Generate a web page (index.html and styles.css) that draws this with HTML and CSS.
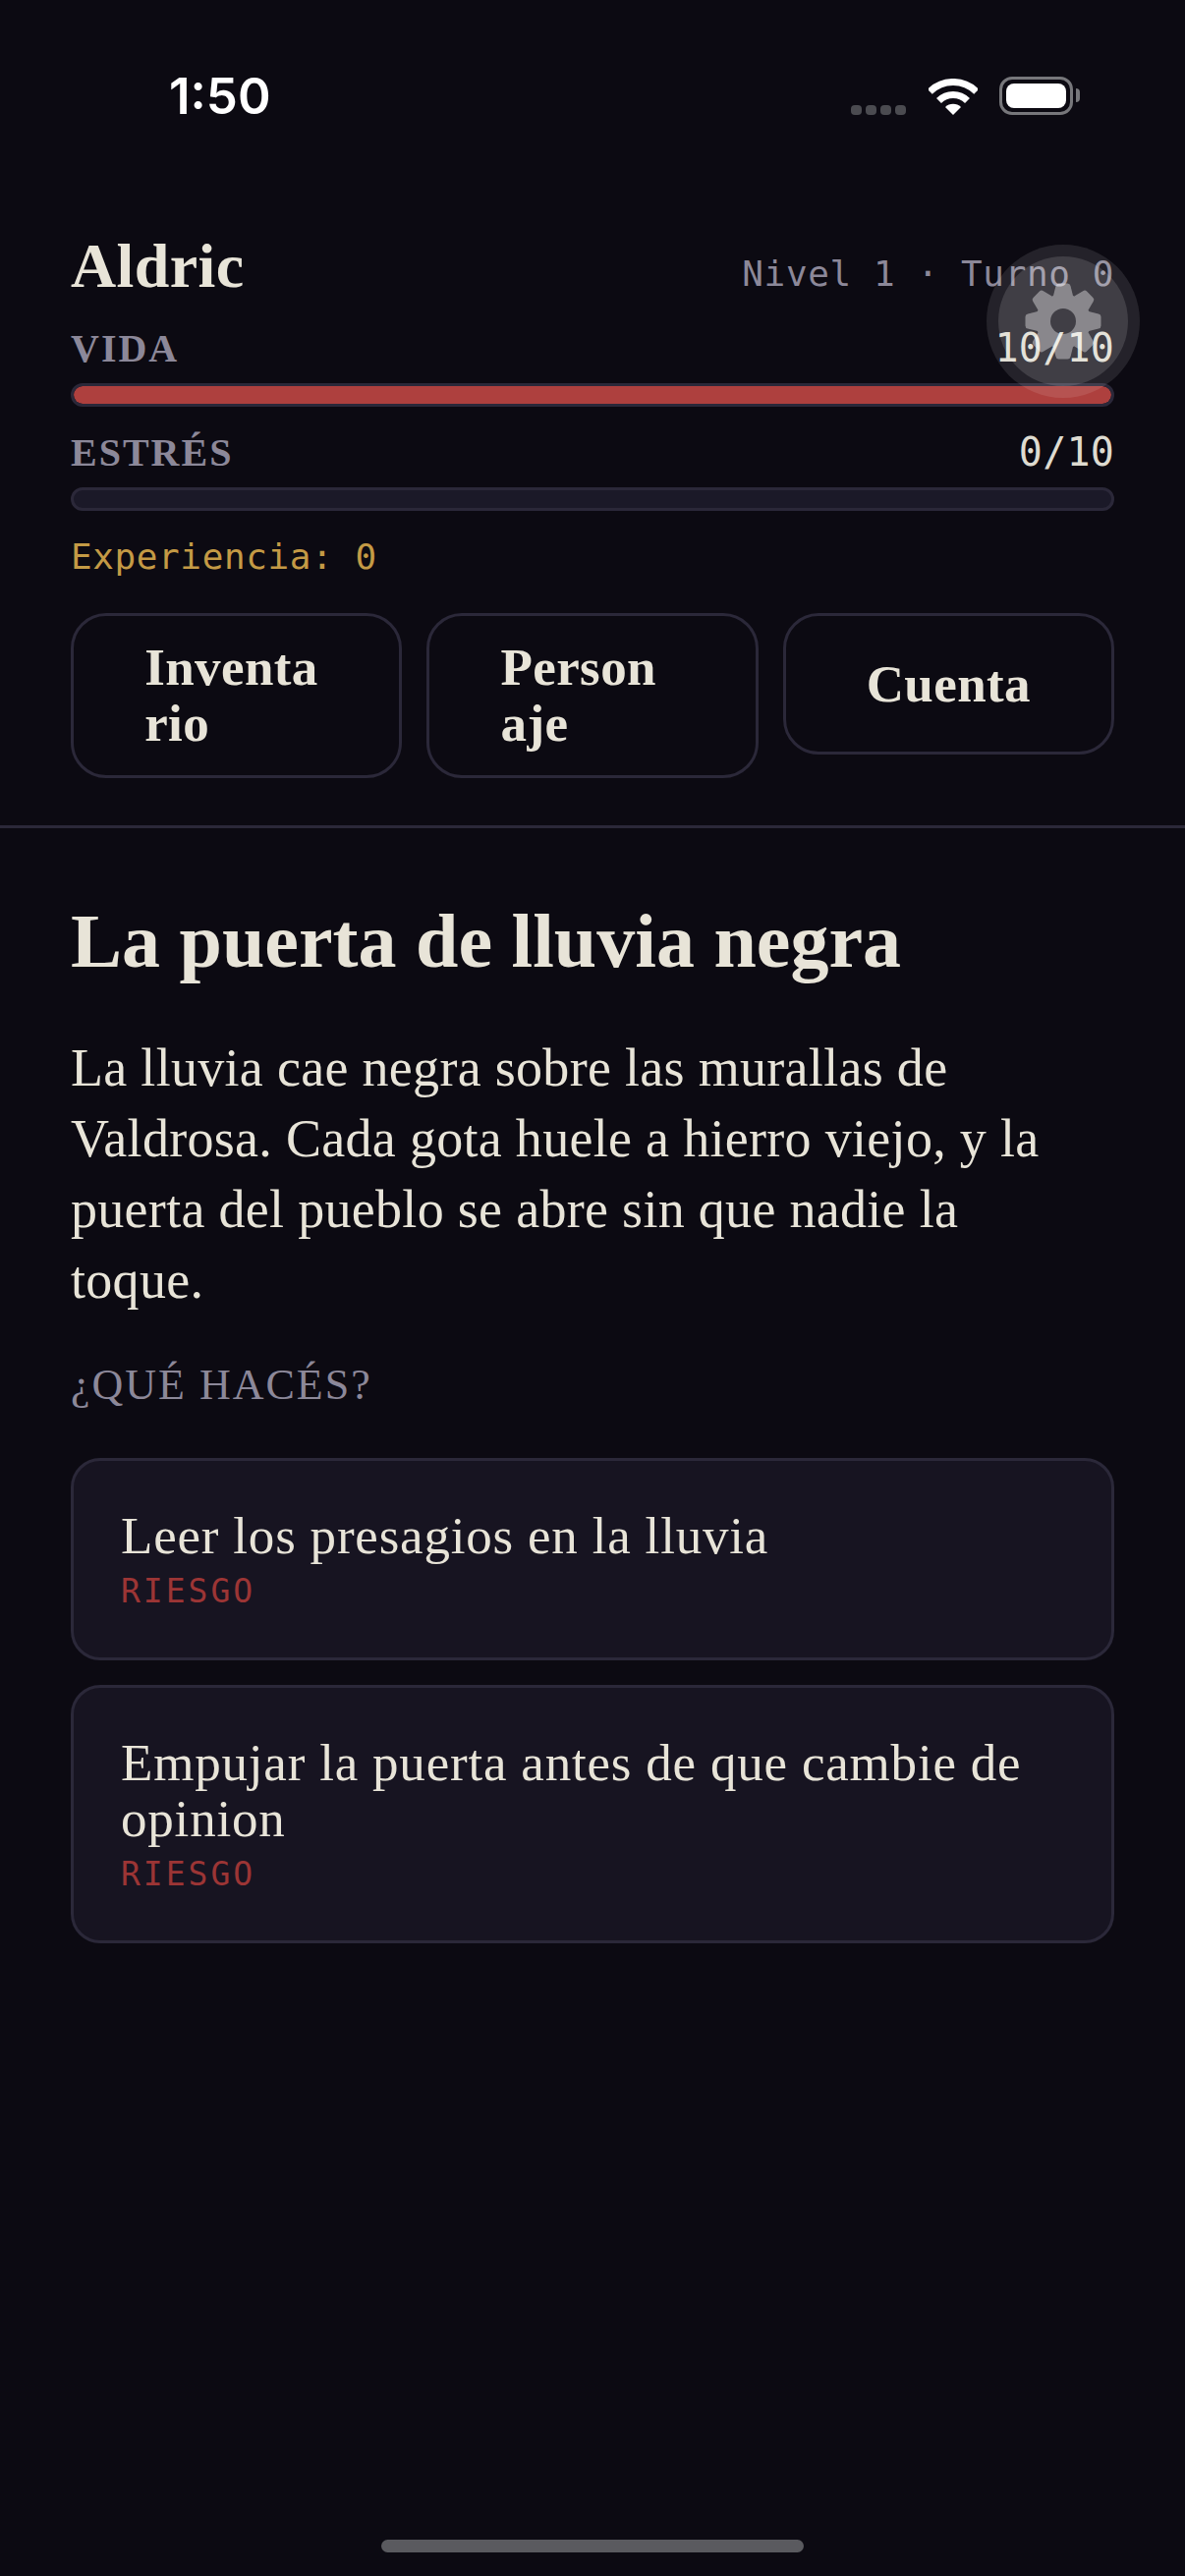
FILE: index.html
```html
<!DOCTYPE html>
<html lang="es">
<head>
    <meta charset="UTF-8">
    <meta name="viewport" content="width=device-width, initial-scale=1.0">
    <title>La puerta de lluvia negra</title>
    <link rel="stylesheet" href="styles.css">
</head>
<body>
    <div class="status-bar">
        <span class="clock">1:50</span>
        <div class="status-icons">
            <div class="signal"><i></i><i></i><i></i><i></i></div>
            <svg class="wifi" width="50" height="37" viewBox="0 0 50 37">
                <path d="M1.3 13.3A33.5 33.5 0 0 1 48.7 13.3" fill="none" stroke="#fff" stroke-width="7"/>
                <path d="M10.5 22.5A20.5 20.5 0 0 1 39.5 22.5" fill="none" stroke="#fff" stroke-width="7"/>
                <path d="M25 37L17 29A11.3 11.3 0 0 1 33 29Z" fill="#fff"/>
            </svg>
            <div class="battery"><div class="battery-level"></div></div>
        </div>
    </div>

    <div class="hud">
        <div class="hud-top">
            <h2 class="hero-name">Aldric</h2>
            <span class="hero-meta">Nivel 1 · Turno 0</span>
        </div>

        <div class="stat stat-life">
            <div class="stat-row">
                <span class="stat-label">VIDA</span>
                <span class="stat-value">10/10</span>
            </div>
            <div class="stat-track"><div class="stat-fill" style="width: 100%"></div></div>
        </div>

        <div class="stat stat-stress">
            <div class="stat-row">
                <span class="stat-label">ESTRÉS</span>
                <span class="stat-value">0/10</span>
            </div>
            <div class="stat-track"></div>
        </div>

        <div class="xp">Experiencia: 0</div>

        <div class="tabs">
            <button class="tab"><span>Inventa<br>rio</span></button>
            <button class="tab"><span>Person<br>aje</span></button>
            <button class="tab"><span>Cuenta</span></button>
        </div>
    </div>

    <div class="scene">
        <h1>La puerta de lluvia negra</h1>
        <p>La lluvia cae negra sobre las murallas de Valdrosa. Cada gota huele a hierro viejo, y la puerta del pueblo se abre sin que nadie la toque.</p>
        <div class="prompt">¿QUÉ HACÉS?</div>

        <div class="choices">
            <button class="choice">
                <span class="choice-text">Leer los presagios en la lluvia</span>
                <span class="choice-risk">RIESGO</span>
            </button>
            <button class="choice">
                <span class="choice-text">Empujar la puerta antes de que cambie de opinion</span>
                <span class="choice-risk">RIESGO</span>
            </button>
        </div>
    </div>

    <div class="home-bar"></div>

    <!-- boton flotante, queda encima del HUD -->
    <button class="settings">
        <span class="settings-inner">
            <svg width="80" height="80" viewBox="-40 -40 80 80">
                <defs>
                    <path id="tooth" d="M-10 -26L-7.5 -36Q-7 -38.5 -4.5 -38.5H4.5Q7 -38.5 7.5 -36L10 -26Z"/>
                    <mask id="gear-hole">
                        <rect x="-40" y="-40" width="80" height="80" fill="#fff"/>
                        <circle r="13" fill="#000"/>
                    </mask>
                </defs>
                <g fill="#fff" opacity="0.38" mask="url(#gear-hole)">
                    <circle r="28"/>
                    <use href="#tooth"/>
                    <use href="#tooth" transform="rotate(45)"/>
                    <use href="#tooth" transform="rotate(90)"/>
                    <use href="#tooth" transform="rotate(135)"/>
                    <use href="#tooth" transform="rotate(180)"/>
                    <use href="#tooth" transform="rotate(225)"/>
                    <use href="#tooth" transform="rotate(270)"/>
                    <use href="#tooth" transform="rotate(315)"/>
                </g>
            </svg>
        </span>
    </button>
</body>
</html>
```

FILE: styles.css
```css
* {
    box-sizing: border-box;
}
body {
    margin: 0;
    width: 1206px;
    min-height: 2622px;
    display: flex;
    flex-direction: column;
    position: relative;
    background-color: #0c0a12;
    color: #e8e4d8;
    font-family: "Liberation Serif", serif;
}
button {
    font-family: inherit;
    color: inherit;
    cursor: pointer;
}

/* status bar */
.status-bar {
    height: 240px;
    padding: 62px 114px 0 172px;
    display: flex;
    justify-content: space-between;
    align-items: flex-start;
}
.clock {
    font-family: Inter, sans-serif;
    font-size: 51px;
    font-weight: 600;
    line-height: 72px;
    color: #fff;
}
.status-icons {
    display: flex;
    align-items: flex-end;
    padding-top: 16px;
}
.signal {
    display: flex;
    gap: 4px;
    margin-right: 23px;
}
.signal i {
    width: 11px;
    height: 10px;
    border-radius: 4px;
    background: #4b4b50;
}
.wifi {
    margin-right: 22px;
}
.battery {
    width: 75px;
    height: 39px;
    padding: 4px;
    border: 3px solid #77777b;
    border-radius: 13px;
    position: relative;
}
.battery::after {
    content: "";
    position: absolute;
    right: -10px;
    top: 9px;
    width: 4px;
    height: 14px;
    border-radius: 0 4px 4px 0;
    background: #77777b;
}
.battery-level {
    height: 100%;
    background: #fff;
    border-radius: 8px;
}

/* hud */
.hud {
    padding: 0 72px 48px;
    border-bottom: 3px solid #2b2839;
}
.hud-top {
    display: flex;
    justify-content: space-between;
    align-items: center;
    height: 60px;
}
.hero-name {
    margin: 0;
    padding-top: 2px;
    font-size: 64px;
    font-weight: 700;
    line-height: 62px;
    letter-spacing: 0.4px;
}
.hero-meta {
    font-family: "DejaVu Sans Mono", monospace;
    font-size: 36px;
    letter-spacing: 0.6px;
    color: #8c8899;
    position: relative;
    top: 8px;
}
.stat {
    margin-top: 23px;
}
.stat-life {
    margin-top: 31px;
}
.stat-row {
    display: flex;
    justify-content: space-between;
    align-items: center;
    height: 46px;
}
.stat-label {
    font-size: 40px;
    font-weight: 700;
    letter-spacing: 2px;
    color: #8c8899;
}
.stat-value {
    font-family: "DejaVu Sans Mono", monospace;
    font-size: 40px;
    letter-spacing: 0.2px;
    color: #dedbd0;
}
.stat-track {
    height: 24px;
    margin-top: 13px;
    border: 3px solid #2b2839;
    border-radius: 12px;
    background: #1b1928;
    overflow: hidden;
}
.stat-fill {
    height: 100%;
    background: #ae403e;
    border-radius: 9px;
}
.xp {
    margin-top: 23px;
    font-family: "DejaVu Sans Mono", monospace;
    font-size: 36px;
    line-height: 48px;
    letter-spacing: 0.6px;
    color: #c49a45;
}
.tabs {
    display: flex;
    align-items: flex-start;
    gap: 25px;
    margin-top: 33px;
}
.tab {
    flex: 1;
    min-height: 144px;
    padding: 24px 20px;
    display: flex;
    justify-content: center;
    align-items: center;
    background: transparent;
    border: 3px solid #2b2839;
    border-radius: 36px;
    font-size: 53px;
    font-weight: 700;
    line-height: 57px;
    letter-spacing: 0.4px;
    text-align: left;
}
.tab span {
    display: block;
    width: 0;
    flex-grow: 1;
    max-width: 187px;
}
.tab:last-child span {
    width: auto;
    flex-grow: 0;
}

/* scene */
.scene {
    padding: 72px 72px 0;
}
.scene h1 {
    margin: 0;
    font-size: 78px;
    font-weight: 700;
    line-height: 86px;
}
.scene p {
    max-width: 1040px;
    margin: 50px 0 0;
    font-size: 54px;
    line-height: 72px;
    letter-spacing: 0.3px;
}
.prompt {
    margin-top: 47px;
    font-size: 44px;
    line-height: 48px;
    letter-spacing: 2px;
    color: #8c8899;
}
.choices {
    display: flex;
    flex-direction: column;
    gap: 25px;
    margin-top: 50px;
}
.choice {
    display: block;
    width: 100%;
    padding: 48px;
    background: #171421;
    border: 3px solid #2b2839;
    border-radius: 30px;
    text-align: left;
}
.choice-text {
    display: block;
    font-size: 53px;
    line-height: 57px;
    letter-spacing: 0.8px;
    color: #e8e4d8;
}
.choice-risk {
    display: block;
    margin-top: 8px;
    font-family: "DejaVu Sans Mono", monospace;
    font-size: 33px;
    line-height: 39px;
    letter-spacing: 3px;
    color: #9c3535;
}

.home-bar {
    width: 430px;
    height: 13px;
    margin: auto auto 24px;
    border-radius: 7px;
    background: #5a5a5f;
}

/* ajustes */
.settings {
    position: absolute;
    top: 249px;
    right: 46px;
    width: 156px;
    height: 156px;
    padding: 12px;
    border: 0;
    border-radius: 50%;
    background: rgba(255, 255, 255, 0.1);
}
.settings-inner {
    display: flex;
    justify-content: center;
    align-items: center;
    width: 132px;
    height: 132px;
    border-radius: 50%;
    background: rgba(255, 255, 255, 0.13);
}
```
